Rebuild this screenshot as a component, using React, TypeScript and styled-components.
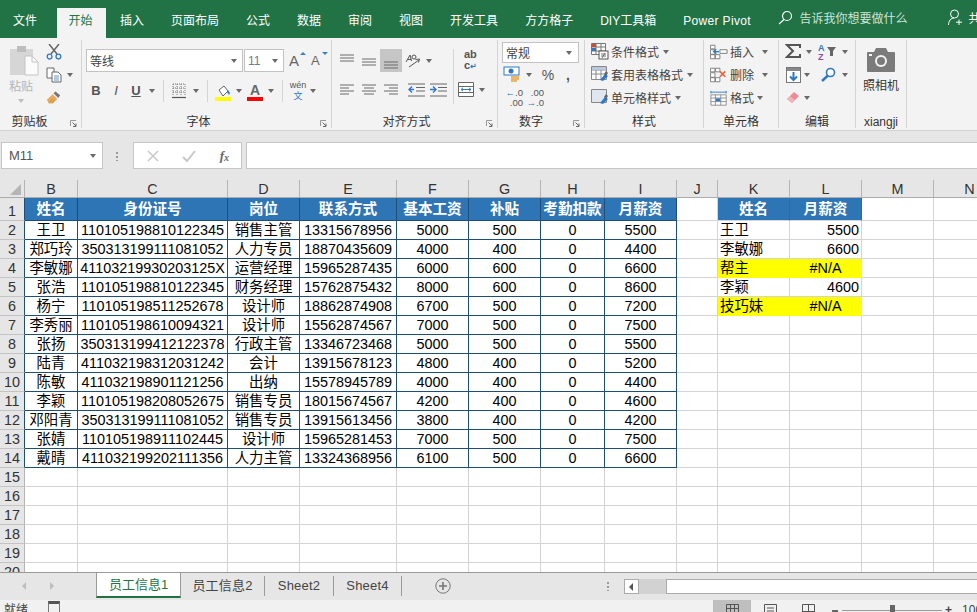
import React, { FC } from "react";
import styled, { createGlobalStyle } from "styled-components";

const TABS = ["插入", "页面布局", "公式", "数据", "审阅", "视图", "开发工具", "方方格子", "DIY工具箱"];
const COLUMNS = ["B", "C", "D", "E", "F", "G", "H", "I", "J", "K", "L", "M", "N"];
const HEADERS = ["姓名", "身份证号", "岗位", "联系方式", "基本工资", "补贴", "考勤扣款", "月薪资"];
const STAFF = [
  ["王卫", "110105198810122345", "销售主管", "13315678956", "5000", "500", "0", "5500"],
  ["郑巧玲", "350313199111081052", "人力专员", "18870435609", "4000", "400", "0", "4400"],
  ["李敏娜", "41103219930203125X", "运营经理", "15965287435", "6000", "600", "0", "6600"],
  ["张浩", "110105198810122345", "财务经理", "15762875432", "8000", "600", "0", "8600"],
  ["杨宁", "110105198511252678", "设计师", "18862874908", "6700", "500", "0", "7200"],
  ["李秀丽", "110105198610094321", "设计师", "15562874567", "7000", "500", "0", "7500"],
  ["张扬", "350313199412122378", "行政主管", "13346723468", "5000", "500", "0", "5500"],
  ["陆青", "411032198312031242", "会计", "13915678123", "4800", "400", "0", "5200"],
  ["陈敏", "411032198901121256", "出纳", "15578945789", "4000", "400", "0", "4400"],
  ["李颖", "110105198208052675", "销售专员", "18015674567", "4200", "400", "0", "4600"],
  ["邓阳青", "350313199111081052", "销售专员", "13915613456", "3800", "400", "0", "4200"],
  ["张婧", "110105198911102445", "设计师", "15965281453", "7000", "500", "0", "7500"],
  ["戴晴", "411032199202111356", "人力主管", "13324368956", "6100", "500", "0", "6600"],
];
const LOOKUP = [
  ["王卫", "5500"],
  ["李敏娜", "6600"],
  ["帮主", "#N/A"],
  ["李颖", "4600"],
  ["技巧妹", "#N/A"],
];

const Lines: FC<{ rows: [number, number, number][] }> = ({ rows }) => (
  <svg width="16" height="18" viewBox="0 0 16 18">
    {rows.map(([x1, x2, y]) => (
      <line key={`${x1}${y}`} x1={x1} x2={x2} y1={y} y2={y} stroke="#6a6a6a" strokeWidth="1" />
    ))}
  </svg>
);

const PasteIcon = () => (
  <svg width="30" height="31" viewBox="0 0 30 31">
    <rect x="1" y="4" width="23" height="26" fill="#d6d6d6" />
    <rect x="8" y="1" width="9" height="6" fill="#bdbdbd" />
    <path d="M16 11h7l6 6v13H16z" fill="#fbfbfb" stroke="#c4c4c4" />
    <path d="M23 11v6h6" fill="none" stroke="#c4c4c4" />
  </svg>
);
const ScissorsIcon = () => (
  <svg width="16" height="16" viewBox="0 0 16 16">
    <path d="M3 0l8 10M13 0L5 10" stroke="#666" strokeWidth="1.5" />
    <circle cx="3.6" cy="12.6" r="2.4" fill="none" stroke="#2f78c4" strokeWidth="1.3" />
    <circle cx="12.4" cy="12.6" r="2.4" fill="none" stroke="#2f78c4" strokeWidth="1.3" />
  </svg>
);
const CopyIcon = () => (
  <svg width="16" height="16" viewBox="0 0 16 16">
    <path d="M1 1h7v10H1z" fill="#fff" stroke="#666" />
    <path d="M6 5h6l3 3v7H6z" fill="#fff" stroke="#666" />
    <path d="M8 9h5M8 11h5M8 13h5" stroke="#6b94c4" />
  </svg>
);
const PainterIcon = () => (
  <svg width="17" height="15" viewBox="0 0 17 15">
    <path d="M1 10l6-6 5 5-5 5H3z" fill="#e9a95a" />
    <path d="M8 3l2-2 5 4-2 3z" fill="#777" />
    <path d="M4 13l3-4M7 13l2-3" stroke="#c98a3c" />
  </svg>
);
const BordersIcon = () => (
  <svg width="14" height="16" viewBox="0 0 14 16">
    <path d="M1 1h12M1 5h12M1 9h12M1 1v12M5 1v12M9 1v12M13 1v12" stroke="#777" strokeDasharray="1 1" />
    <path d="M0 14.5h14" stroke="#555" strokeWidth="1.2" />
  </svg>
);
const BucketIcon = () => (
  <svg width="16" height="12" viewBox="0 0 16 12">
    <path d="M4 5l5-4 4 5-5 5z" fill="#fff" stroke="#666" />
    <path d="M13 5l2 3-1 2-2-3z" fill="#2f78c4" />
  </svg>
);
const OrientIcon = () => (
  <svg width="18" height="16" viewBox="0 0 18 16">
    <path d="M1 9l4-7 1.500 6M2.500 6.500l3.500 0" fill="none" stroke="#555" />
    <circle cx="9" cy="4" r="2" fill="none" stroke="#555" />
    <path d="M4 14l10-7M10.500 6.500l4-.5-1 3.500" fill="none" stroke="#555" />
  </svg>
);
const IndentIcon: FC<{ flip?: boolean }> = ({ flip }) => (
  <svg width="17" height="14" viewBox="0 0 17 14">
    <path d="M0 1h17M8 4.500h9M8 8h9M0 13h17" stroke="#666" />
    {flip ? (
      <path d="M0 6.500h5M3 3.500l3 3-3 3" fill="none" stroke="#2f78c4" strokeWidth="1.400" />
    ) : (
      <path d="M6 6.500H1M4 3.500l-3 3 3 3" fill="none" stroke="#2f78c4" strokeWidth="1.400" />
    )}
  </svg>
);
const MergeIcon = () => (
  <svg width="16" height="15" viewBox="0 0 16 15">
    <path d="M.5.500h15v14H.5zM.5 4.500h15M.5 10.500h15" fill="#fff" stroke="#666" />
    <path d="M3 7.500h10M5 5.800L3 7.500l2 1.700M11 5.800l2 1.700-2 1.700" fill="none" stroke="#2f78c4" />
  </svg>
);
const CurrencyIcon = () => (
  <svg width="18" height="17" viewBox="0 0 18 17">
    <rect x="1" y="1" width="15" height="8" fill="#fff" stroke="#2f78c4" />
    <ellipse cx="8" cy="5" rx="2.500" ry="2.500" fill="#2f78c4" />
    <path d="M8 11h8M8 13h8M8 15h6" stroke="#e8a33d" strokeWidth="1.300" />
  </svg>
);
const ConditionalIcon = () => (
  <svg width="18" height="17" viewBox="0 0 18 17">
    <path d="M.5.500h14v11H.5zM.5 4h14M.5 8h14M5 .5v11M10 .5v11" fill="#fff" stroke="#777" />
    <rect x="1" y="1" width="4" height="3" fill="#d9472b" />
    <rect x="1" y="5" width="4" height="3" fill="#2f78c4" />
    <rect x="8" y="8" width="9" height="8" fill="#fff" stroke="#555" />
    <path d="M10 11h5M10 13h5M14 10l-3 5" stroke="#555" strokeWidth=".8" />
  </svg>
);
const TableIcon: FC<{ plain?: boolean }> = ({ plain }) => (
  <svg width="18" height="17" viewBox="0 0 18 17">
    <path d="M.5.500h15v13H.5z" fill={plain ? "#dfe6ef" : "#fff"} stroke="#888" />
    {!plain && <path d="M.5 4h15M.5 8h15M5 .5v13M10 .5v13" stroke="#888" />}
    {!plain && <rect x="1" y="1" width="14" height="3" fill="#b8c9df" />}
    <path d="M9 14l5-6 3 2-5 5z" fill="#2f78c4" />
    <path d="M13 8l2-3 2 2-2 3z" fill="#666" />
  </svg>
);
const InsertIcon = () => (
  <svg width="20" height="16" viewBox="0 0 20 16">
    <path d="M.5.500h5v4h-5zM.5 5.500h5v5h-5zM.5 11h5v4.500h-5zM6 11h5v4.500H6z" fill="#fff" stroke="#777" />
    <path d="M11 5.500h8v4h-8z" fill="#fff" stroke="#777" />
    <path d="M10 7.500H4M7 5l-3 2.500L7 10" fill="none" stroke="#2f78c4" strokeWidth="1.400" />
  </svg>
);
const DeleteIcon = () => (
  <svg width="20" height="16" viewBox="0 0 20 16">
    <path d="M.5.500h5v4h-5zM.5 5.500h5v5h-5zM.5 11h5v4.500h-5zM6 11h5v4.500H6z" fill="#fff" stroke="#777" />
    <path d="M6 .5h5v4H6z" fill="#fff" stroke="#777" />
    <path d="M11 4l6 6M17 4l-6 6" stroke="#e0633c" strokeWidth="1.800" />
  </svg>
);
const FormatIcon = () => (
  <svg width="20" height="18" viewBox="0 0 20 18">
    <path d="M1 5.500h17v11.500H1zM1 9h17M1 13h17M6 5.500V17M12 5.500V17" fill="#fff" stroke="#888" />
    <rect x="6.500" y="9.500" width="5" height="3" fill="#2f78c4" />
    <path d="M1 2.500h17M1 1v3M18 1v3" stroke="#2f78c4" />
  </svg>
);
const SumIcon = () => (
  <svg width="16" height="15" viewBox="0 0 16 15">
    <path d="M15 4V1H2l6 6-6 6h13v-3" fill="none" stroke="#555" strokeWidth="2" />
  </svg>
);
const SortIcon = () => (
  <svg width="20" height="18" viewBox="0 0 20 18">
    <text x="0" y="8" fontSize="9" fontWeight="700" fill="#2f78c4" fontFamily="Liberation Sans">
      A
    </text>
    <text x="0" y="17" fontSize="9" fontWeight="700" fill="#8a4db0" fontFamily="Liberation Sans">
      Z
    </text>
    <path d="M9 4h9l-3 4v5h-3V8z" fill="#666" />
  </svg>
);
const FillDownIcon = () => (
  <svg width="15" height="16" viewBox="0 0 15 16">
    <rect x=".5" y=".5" width="14" height="15" fill="#fff" stroke="#777" />
    <rect x="1" y="1" width="13" height="3" fill="#888" />
    <path d="M7.500 5v8M4 9.500l3.500 3.500L11 9.500" fill="none" stroke="#2f78c4" strokeWidth="2" />
  </svg>
);
const FindIcon = () => (
  <svg width="15" height="15" viewBox="0 0 15 15">
    <circle cx="9.500" cy="5.500" r="4" fill="#fff" stroke="#2f78c4" strokeWidth="1.600" />
    <path d="M7 8.500L1 14" stroke="#2f78c4" strokeWidth="2.400" />
  </svg>
);
const EraserIcon = () => (
  <svg width="14" height="13" viewBox="0 0 14 13">
    <path d="M1 8l7-7 5 4-7 7z" fill="#ec8a96" />
    <path d="M1 8l3-3 5 4-3 3z" fill="#f2b4bc" />
  </svg>
);
const CameraIcon = () => (
  <svg width="28" height="24" viewBox="0 0 28 24">
    <path d="M0 5a1 1 0 011-1h6l2-4h10l2 4h6a1 1 0 011 1v18a1 1 0 01-1 1H1a1 1 0 01-1-1z" fill="#7b7b7b" />
    <circle cx="14" cy="13" r="6" fill="#f3f3f3" />
    <circle cx="14" cy="13" r="4" fill="#7b7b7b" />
    <rect x="2" y="6" width="3" height="2" fill="#f3f3f3" />
  </svg>
);
const SearchIcon = () => (
  <svg width="15" height="15" viewBox="0 0 15 15">
    <circle cx="9" cy="6" r="4.500" fill="none" stroke="#fff" strokeWidth="1.200" />
    <path d="M6 9.500L1 14" stroke="#fff" strokeWidth="1.200" />
  </svg>
);
const UserIcon = () => (
  <svg width="15" height="17" viewBox="0 0 15 17">
    <circle cx="6.500" cy="5" r="4" fill="none" stroke="#fff" />
    <path d="M.5 16c0-4 2.500-7 5.500-7M11 10.500v5.500M8 13.200h6" fill="none" stroke="#fff" />
  </svg>
);
const Launcher = () => (
  <LauncherBox>
    <svg width="7" height="7" viewBox="0 0 7 7">
      <path d="M.5 6V.5H6" fill="none" stroke="#999" />
      <path d="M2.500 2.500L6 6M6 3.500V6.500H3" fill="none" stroke="#666" />
    </svg>
  </LauncherBox>
);

const StyleRow: FC<{ icon: React.ReactNode; label: string; gap?: number; caretGap?: number }> = ({
  icon,
  label,
  gap = 2,
  caretGap = 4,
}) => (
  <ToolRow>
    <Tool $w={18}>{icon}</Tool>
    <ToolLabel $ml={gap}>{label}</ToolLabel>
    <Caret $ml={caretGap} />
  </ToolRow>
);

const App: FC = () => {
  return (
    <Root>
      <GlobalStyle />
      <TitleBar>
        <TitleTab>文件</TitleTab>
        <ActiveTitleTab>开始</ActiveTitleTab>
        {TABS.map((tab) => (
          <TitleTab key={tab}>{tab}</TitleTab>
        ))}
        <PivotTab>Power Pivot</PivotTab>
        <Search>
          <SearchIcon />
          <span>告诉我你想要做什么</span>
        </Search>
        <Share>
          <UserIcon />
          <span>共享</span>
        </Share>
      </TitleBar>

      <Ribbon>
        <Group $w={82}>
          <GroupBody $pl={9}>
            <PasteColumn>
              <PasteIcon />
              <PasteLabel>粘贴</PasteLabel>
              <Caret $light $ml={9} />
            </PasteColumn>
            <ToolStack>
              <ToolRow>
                <Tool $w={16}>
                  <ScissorsIcon />
                </Tool>
              </ToolRow>
              <ToolRow>
                <Tool $w={16}>
                  <CopyIcon />
                </Tool>
                <Caret $ml={5} />
              </ToolRow>
              <ToolRow>
                <Tool $w={16}>
                  <PainterIcon />
                </Tool>
              </ToolRow>
            </ToolStack>
          </GroupBody>
          <GroupLabel>
            <GroupText $pull={22}>剪贴板</GroupText>
            <Launcher />
          </GroupLabel>
        </Group>

        <Group $w={250}>
          <FontBody>
            <FontRow>
              <SelectBox $w={157}>
                等线
                <Caret />
              </SelectBox>
              <SelectBox $w={40} $accent>
                11
                <Caret />
              </SelectBox>
              <GrowLetter>
                A<UpMark />
              </GrowLetter>
              <ShrinkLetter>
                A<DownMark />
              </ShrinkLetter>
            </FontRow>
            <FontRow>
              <StyleLetter $bold>B</StyleLetter>
              <StyleLetter $italic>I</StyleLetter>
              <StyleLetter $under>U</StyleLetter>
              <CaretSlot $w={12}>
                <Caret />
              </CaretSlot>
              <VSep />
              <Tool $w={20}>
                <BordersIcon />
              </Tool>
              <CaretSlot $w={13}>
                <Caret />
              </CaretSlot>
              <VSep />
              <Swatch $color="#ffff00">
                <BucketIcon />
              </Swatch>
              <CaretSlot $w={12}>
                <Caret />
              </CaretSlot>
              <Swatch $color="#ff0000">
                <ColorLetter>A</ColorLetter>
              </Swatch>
              <CaretSlot $w={12}>
                <Caret />
              </CaretSlot>
              <VSep />
              <WenBox>
                <span>wén</span>
                <b>文</b>
              </WenBox>
              <CaretSlot $w={10}>
                <Caret />
              </CaretSlot>
            </FontRow>
          </FontBody>
          <GroupLabel>
            <GroupText $pull={16}>字体</GroupText>
            <Launcher />
          </GroupLabel>
        </Group>

        <Group $w={166}>
          <AlignBody>
            <AlignColumn>
              <AlignRow>
                <Tool $w={22}>
                  <Lines
                    rows={[
                      [1, 15, 3],
                      [1, 15, 6],
                      [1, 15, 9],
                    ]}
                  />
                </Tool>
                <Tool $w={22}>
                  <Lines
                    rows={[
                      [1, 15, 7],
                      [1, 15, 10],
                      [1, 15, 13],
                    ]}
                  />
                </Tool>
                <ActiveTool $w={22}>
                  <Lines
                    rows={[
                      [1, 15, 10],
                      [1, 15, 13],
                      [1, 15, 16],
                    ]}
                  />
                </ActiveTool>
                <Tool $w={24}>
                  <OrientIcon />
                </Tool>
                <Caret />
              </AlignRow>
              <AlignRow>
                <Tool $w={22}>
                  <Lines
                    rows={[
                      [1, 15, 4],
                      [1, 10, 7],
                      [1, 15, 10],
                      [1, 10, 13],
                    ]}
                  />
                </Tool>
                <Tool $w={22}>
                  <Lines
                    rows={[
                      [1, 15, 4],
                      [3, 13, 7],
                      [1, 15, 10],
                      [3, 13, 13],
                    ]}
                  />
                </Tool>
                <Tool $w={22}>
                  <Lines
                    rows={[
                      [1, 15, 4],
                      [6, 15, 7],
                      [1, 15, 10],
                      [6, 15, 13],
                    ]}
                  />
                </Tool>
                <Tool $w={22} $ml={3}>
                  <IndentIcon />
                </Tool>
                <Tool $w={22}>
                  <IndentIcon flip />
                </Tool>
              </AlignRow>
            </AlignColumn>
            <TallSep />
            <WrapColumn>
              <WrapText>
                <span>ab</span>
                <span>
                  c<WrapArrow>↵</WrapArrow>
                </span>
              </WrapText>
              <MergeRow>
                <MergeIcon />
                <Caret $ml={5} />
              </MergeRow>
            </WrapColumn>
          </AlignBody>
          <GroupLabel>
            <GroupText $pull={16}>对齐方式</GroupText>
            <Launcher />
          </GroupLabel>
        </Group>

        <Group $w={87}>
          <NumberBody>
            <NumberSelect>
              常规
              <Caret />
            </NumberSelect>
            <NumberRow>
              <Tool $w={20}>
                <CurrencyIcon />
              </Tool>
              <CaretSlot $w={14}>
                <Caret />
              </CaretSlot>
              <Percent>%</Percent>
              <Comma>,</Comma>
            </NumberRow>
            <NumberRow>
              <DecimalTool>
                <span>
                  <DecimalArrow>←</DecimalArrow>.0
                </span>
                <span>.00</span>
              </DecimalTool>
              <DecimalTool>
                <span>.00</span>
                <span>
                  <DecimalArrow>→</DecimalArrow>.0
                </span>
              </DecimalTool>
            </NumberRow>
          </NumberBody>
          <GroupLabel>
            <GroupText $pull={20}>数字</GroupText>
            <Launcher />
          </GroupLabel>
        </Group>

        <Group $w={119}>
          <GroupBody $pl={6}>
            <ToolStack>
              <StyleRow icon={<ConditionalIcon />} label="条件格式" />
              <StyleRow icon={<TableIcon />} label="套用表格格式" />
              <StyleRow icon={<TableIcon plain />} label="单元格样式" />
            </ToolStack>
          </GroupBody>
          <GroupLabel>
            <GroupText>样式</GroupText>
          </GroupLabel>
        </Group>

        <Group $w={75}>
          <GroupBody $pl={6}>
            <ToolStack>
              <StyleRow icon={<InsertIcon />} label="插入" gap={2} caretGap={8} />
              <StyleRow icon={<DeleteIcon />} label="删除" gap={2} caretGap={8} />
              <StyleRow icon={<FormatIcon />} label="格式" gap={2} caretGap={3} />
            </ToolStack>
          </GroupBody>
          <GroupLabel>
            <GroupText>单元格</GroupText>
          </GroupLabel>
        </Group>

        <Group $w={77}>
          <GroupBody $pl={6}>
            <ToolStack>
              <ToolRow>
                <Tool $w={16}>
                  <SumIcon />
                </Tool>
                <Caret $ml={5} />
                <Tool $w={20} $ml={6}>
                  <SortIcon />
                </Tool>
                <Caret $ml={4} />
              </ToolRow>
              <ToolRow>
                <Tool $w={16}>
                  <FillDownIcon />
                </Tool>
                <Caret $ml={3} />
                <Tool $w={20} $ml={8}>
                  <FindIcon />
                </Tool>
                <Caret $ml={4} />
              </ToolRow>
              <ToolRow>
                <Tool $w={16}>
                  <EraserIcon />
                </Tool>
                <Caret $ml={3} />
              </ToolRow>
            </ToolStack>
          </GroupBody>
          <GroupLabel>
            <GroupText>编辑</GroupText>
          </GroupLabel>
        </Group>

        <Group $w={51}>
          <CameraBody>
            <CameraIcon />
            <CameraLabel>照相机</CameraLabel>
          </CameraBody>
          <GroupLabel>
            <GroupText>xiangji</GroupText>
          </GroupLabel>
        </Group>
      </Ribbon>

      <FormulaBar>
        <NameBox>
          M11
          <Caret />
        </NameBox>
        <GripDots />
        <FormulaButtons>
          <svg width="12" height="12" viewBox="0 0 12 12">
            <path d="M1 1l10 10M11 1L1 11" stroke="#c8c8c8" strokeWidth="1.500" />
          </svg>
          <svg width="14" height="12" viewBox="0 0 14 12">
            <path d="M1 7l4 4 8-10" fill="none" stroke="#c8c8c8" strokeWidth="2" />
          </svg>
          <FxText>
            f<sub>x</sub>
          </FxText>
        </FormulaButtons>
        <FormulaInput />
      </FormulaBar>

      <Sheet>
        <SheetGrid>
          <Corner />
          {COLUMNS.map((col) => (
            <ColumnHead key={col}>{col}</ColumnHead>
          ))}
          {Array.from({ length: 20 }, (_, i) => {
            const row = i + 1;
            const staff = row >= 2 && row <= 14 ? STAFF[row - 2] : null;
            const lookup = row >= 2 && row <= 6 ? LOOKUP[row - 2] : null;
            const missing = lookup?.[1] === "#N/A";
            return (
              <React.Fragment key={row}>
                <RowHead $tall={row === 1} $edge={row <= 14}>
                  {row}
                </RowHead>
                {HEADERS.map((title, c) =>
                  row === 1 ? (
                    <HeadCell key={title} $navy>
                      {title}
                    </HeadCell>
                  ) : staff ? (
                    <TableCell key={title}>{staff[c]}</TableCell>
                  ) : (
                    <Cell key={title} />
                  )
                )}
                <Cell />
                {row === 1 ? (
                  <>
                    <HeadCell>姓名</HeadCell>
                    <HeadCell>月薪资</HeadCell>
                  </>
                ) : lookup ? (
                  <>
                    <NameCell $warn={missing}>{lookup[0]}</NameCell>
                    <ValueCell $warn={missing}>{lookup[1]}</ValueCell>
                  </>
                ) : (
                  <>
                    <Cell />
                    <Cell />
                  </>
                )}
                <Cell />
                <Cell />
              </React.Fragment>
            );
          })}
        </SheetGrid>
      </Sheet>

      <TabBar>
        <TabNav>
          <NavArrow />
          <NavArrow $next />
        </TabNav>
        <ActiveSheetTab>员工信息1</ActiveSheetTab>
        <SheetTab $w={84}>员工信息2</SheetTab>
        <SheetTab $w={69}>Sheet2</SheetTab>
        <SheetTab $w={68}>Sheet4</SheetTab>
        <AddSheet>
          <svg width="16" height="16" viewBox="0 0 16 16">
            <circle cx="8" cy="8" r="7.200" fill="none" stroke="#777" />
            <path d="M4 8h8M8 4v8" stroke="#777" strokeWidth="1.600" />
          </svg>
        </AddSheet>
        <ScrollGrip />
        <ScrollButton />
        <ScrollThumb />
        <ScrollTrack />
      </TabBar>

      <StatusBar>
        <StatusText>就绪</StatusText>
        <MacroIcon />
        <ViewButton $active>
          <svg width="13" height="13" viewBox="0 0 13 13">
            <path d="M.5.500h12v12H.5zM.5 4.500h12M4.500.5v12M8.500.5v12" fill="none" stroke="#555" />
          </svg>
        </ViewButton>
        <ViewButton>
          <svg width="13" height="13" viewBox="0 0 13 13">
            <path d="M.5.500h12v12H.5zM3 4h7M3 7h7" fill="none" stroke="#555" />
          </svg>
        </ViewButton>
        <ViewButton>
          <svg width="13" height="13" viewBox="0 0 13 13">
            <path d="M.5.500h12v12H.5zM6.500.5v7M.5 7.500h12" fill="none" stroke="#555" />
          </svg>
        </ViewButton>
        <ZoomMark />
        <ZoomSlider>
          <ZoomThumb />
        </ZoomSlider>
        <ZoomPlus>+</ZoomPlus>
        <ZoomValue>100%</ZoomValue>
      </StatusBar>
    </Root>
  );
};

export default App;

const GlobalStyle = createGlobalStyle`
  html, body {
    margin: 0;
    padding: 0;
    background: #fff;
  }
  * {
    box-sizing: border-box;
  }
`;

const Root = styled.div`
  width: 977px;
  height: 612px;
  display: flex;
  flex-direction: column;
  overflow: hidden;
  font-family: "Liberation Sans", "Noto Sans CJK SC", sans-serif;
  color: #444;
`;

const TitleBar = styled.div`
  height: 38px;
  flex: none;
  display: flex;
  background: #217346;
  color: #fff;
  font-size: 12px;
  overflow: hidden;
`;
const TitleTab = styled.div`
  height: 30px;
  flex: none;
  margin-top: 8px;
  padding: 0 13.5px;
  line-height: 26px;
  white-space: nowrap;

  &:first-child {
    padding-left: 13px;
  }
`;
const ActiveTitleTab = styled(TitleTab)`
  width: 49px;
  margin: 8px 1px 0 6px;
  padding: 0 12px;
  background: #f3f3f3;
  color: #217346;
`;
const PivotTab = styled(TitleTab)`
  letter-spacing: 0.35px;
`;
const Search = styled.div`
  display: flex;
  flex: none;
  align-items: center;
  gap: 7px;
  margin-left: 13px;
  padding-bottom: 4px;
  color: #cfe3d8;
  white-space: nowrap;
`;
const Share = styled.div`
  display: flex;
  flex: none;
  align-items: center;
  gap: 6px;
  margin-left: 40px;
  padding-bottom: 3px;
  white-space: nowrap;
`;

const Ribbon = styled.div`
  height: 93px;
  flex: none;
  display: flex;
  padding: 2px 0;
  background: #f3f3f3;
  border-bottom: 1px solid #d2d2d2;
`;
const Group = styled.section<{ $w: number }>`
  width: ${({ $w }) => $w}px;
  flex: none;
  display: flex;
  flex-direction: column;
  border-right: 1px solid #d4d4d4;
`;
const GroupBody = styled.div<{ $pl: number }>`
  height: 73px;
  display: flex;
  padding-left: ${({ $pl }) => $pl}px;
`;
const GroupLabel = styled.div`
  position: relative;
  height: 16px;
  display: flex;
  justify-content: center;
  padding-top: 2px;
  line-height: 16px;
  font-size: 12px;
  color: #333;
`;
const GroupText = styled.span<{ $pull?: number }>`
  margin-right: ${({ $pull }) => $pull ?? 0}px;
`;
const LauncherBox = styled.span`
  position: absolute;
  right: 4px;
  bottom: 1px;
  display: flex;
`;

const PasteColumn = styled.div`
  width: 37px;
  display: flex;
  flex-direction: column;
  align-items: flex-start;
  padding-top: 5px;
`;
const PasteLabel = styled.span`
  margin: 3px 0 4px 0;
  line-height: 16px;
  font-size: 12px;
  color: #b5b5b5;
`;
const ToolStack = styled.div`
  display: flex;
  flex-direction: column;
`;
const ToolRow = styled.div`
  height: 23px;
  display: flex;
  align-items: center;
  white-space: nowrap;
`;
const Tool = styled.div<{ $w: number; $ml?: number }>`
  width: ${({ $w }) => $w}px;
  flex: none;
  margin-left: ${({ $ml }) => $ml ?? 0}px;
  display: flex;
  align-items: center;
  justify-content: center;
`;
const ActiveTool = styled(Tool)`
  height: 23px;
  background: #c6c6c6;
`;
const ToolLabel = styled.span<{ $ml: number }>`
  margin-left: ${({ $ml }) => $ml}px;
  font-size: 12px;
  color: #444;
`;
const Caret = styled.span<{ $ml?: number; $light?: boolean }>`
  flex: none;
  width: 0;
  height: 0;
  margin-left: ${({ $ml }) => $ml ?? 0}px;
  border-left: 3.5px solid transparent;
  border-right: 3.5px solid transparent;
  border-top: 4px solid ${({ $light }) => ($light ? "#bdbdbd" : "#6a6a6a")};
`;
const CaretSlot = styled.div<{ $w: number }>`
  width: ${({ $w }) => $w}px;
  flex: none;
  display: flex;
  justify-content: center;
`;

const FontBody = styled.div`
  height: 73px;
  display: flex;
  flex-direction: column;
  gap: 7px;
  padding: 9px 0 0 4px;
`;
const FontRow = styled.div`
  height: 23px;
  display: flex;
  align-items: center;
`;
const SelectBox = styled.div<{ $w: number; $accent?: boolean }>`
  width: ${({ $w }) => $w}px;
  height: 23px;
  display: flex;
  align-items: center;
  justify-content: space-between;
  padding: 0 5px 0 3px;
  margin-right: 1px;
  background: #fff;
  border: 1px solid #c2c2c2;
  font-size: 12px;
  color: ${({ $accent }) => ($accent ? "#6f7d8a" : "#444")};
`;
const GrowLetter = styled.div`
  position: relative;
  width: 14px;
  margin-left: 4px;
  font-size: 15px;
  line-height: 18px;
  color: #666;
`;
const ShrinkLetter = styled(GrowLetter)`
  margin-left: 8px;
  font-size: 13px;
`;
const UpMark = styled.i`
  position: absolute;
  top: 0;
  right: -3px;
  border-left: 3px solid transparent;
  border-right: 3px solid transparent;
  border-bottom: 3px solid #3b7fc4;
`;
const DownMark = styled.i`
  position: absolute;
  top: 0;
  right: -3px;
  border-left: 3px solid transparent;
  border-right: 3px solid transparent;
  border-top: 3px solid #3b7fc4;
`;
const StyleLetter = styled.div<{ $bold?: boolean; $italic?: boolean; $under?: boolean }>`
  width: 20px;
  flex: none;
  text-align: center;
  font-size: 13px;
  font-family: "Liberation Sans", sans-serif;
  font-weight: ${({ $bold, $under }) => ($bold || $under ? 700 : 400)};
  font-style: ${({ $italic }) => ($italic ? "italic" : "normal")};
  text-decoration: ${({ $under }) => ($under ? "underline" : "none")};
  color: #555;
`;
const VSep = styled.div`
  width: 1px;
  height: 22px;
  flex: none;
  margin: 0 5px;
  background: #d4d4d4;
`;
const Swatch = styled.div<{ $color: string }>`
  width: 20px;
  height: 20px;
  flex: none;
  display: flex;
  flex-direction: column;
  align-items: center;
  justify-content: flex-end;
  padding-bottom: 4px;
  background: linear-gradient(${({ $color }) => $color}, ${({ $color }) => $color}) 2px 16px / 16px 4px no-repeat;
`;
const ColorLetter = styled.span`
  font-size: 14px;
  font-weight: 700;
  line-height: 14px;
  color: #666;
`;
const WenBox = styled.div`
  width: 20px;
  flex: none;
  display: flex;
  flex-direction: column;
  align-items: center;
  font-size: 9px;
  line-height: 11px;
  color: #555;

  b {
    font-weight: 400;
    color: #2f78c4;
  }
`;

const AlignBody = styled.div`
  height: 73px;
  display: flex;
  padding: 9px 0 0 4px;
`;
const AlignColumn = styled.div`
  width: 115px;
  flex: none;
  display: flex;
  flex-direction: column;
  gap: 6px;
`;
const AlignRow = styled.div`
  height: 23px;
  display: flex;
  align-items: center;
`;
const TallSep = styled.div`
  width: 1px;
  height: 55px;
  flex: none;
  margin: 0 0 0 2px;
  background: #d4d4d4;
`;
const WrapColumn = styled.div`
  flex: 1;
  display: flex;
  flex-direction: column;
  align-items: flex-start;
  padding-left: 4px;
`;
const WrapText = styled.div`
  height: 29px;
  display: flex;
  flex-direction: column;
  padding-left: 6px;
  font-size: 11px;
  line-height: 11px;
  color: #555;
  font-weight: 700;
`;
const WrapArrow = styled.span`
  font-size: 8px;
  color: #2f78c4;
`;
const MergeRow = styled.div`
  height: 23px;
  display: flex;
  align-items: center;
`;

const NumberBody = styled.div`
  height: 73px;
  display: flex;
  flex-direction: column;
  padding: 2px 0 0 4px;
`;
const NumberSelect = styled.div`
  width: 77px;
  height: 21px;
  flex: none;
  display: flex;
  align-items: center;
  justify-content: space-between;
  padding: 0 6px 0 3px;
  background: #fff;
  border: 1px solid #c2c2c2;
  font-size: 12px;
`;
const NumberRow = styled.div`
  height: 23px;
  display: flex;
  align-items: center;
`;
const Percent = styled.span`
  width: 20px;
  margin-left: 2px;
  text-align: center;
  font-size: 14px;
  color: #555;
`;
const Comma = styled.span`
  width: 20px;
  text-align: center;
  font-size: 14px;
  font-weight: 700;
  color: #555;
`;
const DecimalTool = styled.div`
  width: 21px;
  display: flex;
  flex-direction: column;
  align-items: flex-end;
  font-size: 9.5px;
  line-height: 10px;
  color: #555;
`;
const DecimalArrow = styled.span`
  color: #2f78c4;
  font-weight: 700;
`;

const CameraBody = styled.div`
  height: 73px;
  display: flex;
  flex-direction: column;
  align-items: center;
  padding-top: 8px;
`;
const CameraLabel = styled.span`
  margin-top: 5px;
  font-size: 12px;
  line-height: 18px;
  color: #333;
`;

const FormulaBar = styled.div`
  height: 49px;
  flex: none;
  display: flex;
  align-items: flex-start;
  padding: 11px 0 0 1px;
  background: #e6e6e6;
`;
const NameBox = styled.div`
  width: 102px;
  height: 27px;
  display: flex;
  align-items: center;
  justify-content: space-between;
  padding: 0 6px 0 7px;
  background: #fff;
  border: 1px solid #c6c6c6;
  font-size: 13px;
  color: #555;
`;
const GripDots = styled.div`
  width: 2px;
  height: 10px;
  margin: 9px 15px 0 13px;
  background: radial-gradient(circle, #9a9a9a 1px, transparent 1.2px) 0 0 / 2px 4px;
`;
const FormulaButtons = styled.div`
  width: 109px;
  height: 27px;
  display: flex;
  align-items: center;
  justify-content: space-between;
  padding: 0 12px 0 13px;
  background: #fff;
  border: 1px solid #c6c6c6;
`;
const FxText = styled.span`
  font-family: "Liberation Serif", serif;
  font-style: italic;
  font-weight: 700;
  font-size: 13px;
  color: #666;

  sub {
    font-size: 10px;
    vertical-align: -1px;
  }
`;
const FormulaInput = styled.div`
  flex: 1;
  height: 27px;
  margin-left: 4px;
  background: #fff;
  border: 1px solid #c6c6c6;
  border-right: none;
`;

const Sheet = styled.div`
  height: 392px;
  flex: none;
  overflow: hidden;
  background: #fff;
`;
const SheetGrid = styled.div`
  display: grid;
  grid-template-columns: 25px 53px 150px 72px 97px 72px 72px 64px 72px 41px 72px 72px 72px 72px;
  grid-template-rows: 18px 23px;
  grid-auto-rows: 19px;
  font-size: 14.4px;
  color: #000;
`;
const Corner = styled.div`
  position: relative;
  height: 18px;
  background: #e6e6e6;
  border-right: 1px solid #b5b5b5;
  border-bottom: 1px solid #ababab;

  &::after {
    content: "";
    position: absolute;
    right: 3px;
    bottom: 2px;
    border-left: 11px solid transparent;
    border-bottom: 11px solid #b5b5b5;
  }
`;
const ColumnHead = styled.div`
  height: 18px;
  background: #e6e6e6;
  border-right: 1px solid #b5b5b5;
  border-bottom: 1px solid #ababab;
  text-align: center;
  line-height: 18px;
  color: #333;
`;
const RowHead = styled.div<{ $tall?: boolean; $edge?: boolean }>`
  height: ${({ $tall }) => ($tall ? 23 : 19)}px;
  background: #e6e6e6;
  border-right: 1px solid ${({ $edge }) => ($edge ? "#1f4e79" : "#b5b5b5")};
  border-bottom: 1px solid #c4c4c4;
  text-align: center;
  line-height: ${({ $tall }) => ($tall ? 27 : 19)}px;
  color: #333;
`;
const Cell = styled.div`
  min-width: 0;
  background: #fff;
  border-right: 1px solid #d4d4d4;
  border-bottom: 1px solid #d4d4d4;
  line-height: 19px;
  white-space: nowrap;
  overflow: hidden;
`;
const TableCell = styled(Cell)`
  text-align: center;
  border-color: #1f4e79;
`;
const HeadCell = styled(Cell)<{ $navy?: boolean }>`
  background: #2e75b6;
  border-right-color: ${({ $navy }) => ($navy ? "#1f4e79" : "#2a6ba8")};
  border-bottom-color: ${({ $navy }) => ($navy ? "#1f4e79" : "#d4d4d4")};
  text-align: center;
  line-height: 22px;
  font-weight: 700;
  font-size: 14.6px;
  color: #fff;
`;
const NameCell = styled(Cell)<{ $warn?: boolean }>`
  padding-left: 2px;
  background: ${({ $warn }) => ($warn ? "#ffff00" : "#fff")};
  border-color: ${({ $warn }) => ($warn ? "#ffff00" : "#d4d4d4")};
`;
const ValueCell = styled(NameCell)`
  padding-right: 2px;
  text-align: ${({ $warn }) => ($warn ? "center" : "right")};
`;

const TabBar = styled.div`
  height: 28px;
  flex: none;
  display: flex;
  align-items: flex-start;
  background: #e6e6e6;
  border-top: 1px solid #9a9a9a;
  font-size: 13px;
`;
const TabNav = styled.div`
  width: 96px;
  height: 26px;
  flex: none;
  display: flex;
  align-items: center;
  gap: 24px;
  padding-left: 22px;
`;
const NavArrow = styled.i<{ $next?: boolean }>`
  width: 0;
  height: 0;
  border-top: 4px solid transparent;
  border-bottom: 4px solid transparent;
  border-left: ${({ $next }) => ($next ? "4px solid #bdbdbd" : "none")};
  border-right: ${({ $next }) => ($next ? "none" : "4px solid #bdbdbd")};
`;
const SheetTab = styled.div<{ $w: number }>`
  width: ${({ $w }) => $w}px;
  height: 20px;
  flex: none;
  margin-top: 3px;
  text-align: center;
  line-height: 19px;
  border-right: 1px solid #9a9a9a;
  color: #444;
  letter-spacing: 0.2px;
`;
const ActiveSheetTab = styled.div`
  width: 85px;
  height: 25px;
  flex: none;
  text-align: center;
  line-height: 23px;
  background: #fff;
  border-left: 1px solid #9a9a9a;
  border-right: 1px solid #9a9a9a;
  border-bottom: 2px solid #217346;
  color: #217346;
`;
const AddSheet = styled.div`
  width: 16px;
  height: 16px;
  flex: none;
  display: flex;
  margin: 5px 0 0 33px;
`;
const ScrollGrip = styled(GripDots)`
  margin: 8px 15px 0 156px;
`;
const ScrollButton = styled.div`
  position: relative;
  width: 15px;
  height: 15px;
  flex: none;
  margin-top: 6px;
  background: #fff;
  border: 1px solid #ababab;

  &::after {
    content: "";
    position: absolute;
    top: 3px;
    left: 4px;
    border-top: 4px solid transparent;
    border-bottom: 4px solid transparent;
    border-right: 4px solid #555;
  }
`;
const ScrollThumb = styled.div`
  width: 27px;
  height: 15px;
  flex: none;
  margin-top: 6px;
  background: #d2d2d2;
`;
const ScrollTrack = styled.div`
  flex: 1;
  height: 15px;
  margin-top: 6px;
  background: #fff;
  border: 1px solid #ababab;
  border-right: none;
`;

const StatusBar = styled.div`
  height: 12px;
  flex: none;
  display: flex;
  align-items: flex-start;
  overflow: hidden;
  background: #f1f1f1;
  font-size: 12px;
  color: #444;
`;
const StatusText = styled.span`
  flex: none;
  margin: 2px 0 0 4px;
  line-height: 16px;
  white-space: nowrap;
`;
const MacroIcon = styled.i`
  width: 12px;
  height: 12px;
  flex: none;
  margin: 1px 653px 0 20px;
  border: 1px solid #777;
  border-top: 3px solid #555;
`;
const ViewButton = styled.div<{ $active?: boolean }>`
  width: 38px;
  height: 12px;
  flex: none;
  display: flex;
  justify-content: center;
  padding-top: 4px;
  background: ${({ $active }) => ($active ? "#bfbfbf" : "transparent")};
`;
const ZoomMark = styled.i`
  width: 6px;
  height: 2px;
  flex: none;
  margin: 10px 4px 0 5px;
  background: #666;
`;
const ZoomSlider = styled.div`
  position: relative;
  width: 100px;
  height: 1px;
  flex: none;
  margin-top: 10px;
  background: #999;
`;
const ZoomThumb = styled.i`
  position: absolute;
  left: 48px;
  top: -5px;
  width: 5px;
  height: 10px;
  background: #666;
`;
const ZoomPlus = styled.span`
  flex: none;
  margin: 2px 0 0 3px;
  line-height: 16px;
  font-weight: 700;
`;
const ZoomValue = styled.span`
  flex: none;
  margin: 2px 0 0 10px;
  line-height: 16px;
  white-space: nowrap;
`;
